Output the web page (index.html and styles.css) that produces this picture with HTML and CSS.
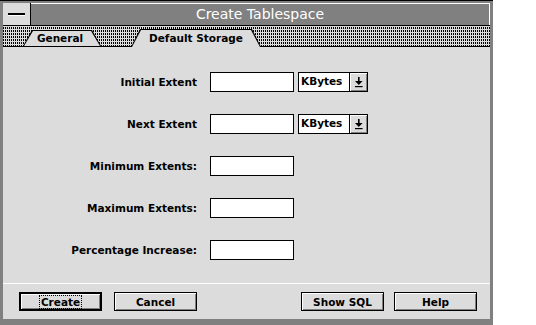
FILE: index.html
```html
<!DOCTYPE html>
<html>
<head>
	<title>Create Tablespace</title>
	<link rel="stylesheet" href="styles.css">
</head>
<body>
<div class="window">
	<div class="titlebar">
		<div class="sysmenu"><span class="dash"></span></div>
		<div class="title">Create Tablespace</div>
	</div>

	<div class="tabs">
		<div class="tab general"><span>General</span></div>
		<div class="tab storage active"><span>Default Storage</span></div>
	</div>

	<div class="panel">
		<div class="row">
			<label>Initial Extent</label>
			<div class="field"></div>
			<div class="combo">
				<span class="combo-text">KBytes</span>
				<span class="combo-btn">
					<svg width="9" height="11" viewBox="0 0 9 11">
						<rect x="4" y="0" width="1.6" height="6" fill="#000"/>
						<polygon points="1,4 8.6,4 4.8,8" fill="#000"/>
						<rect x="1" y="9" width="7.6" height="1.2" fill="#000"/>
					</svg>
				</span>
			</div>
		</div>
		<div class="row">
			<label>Next Extent</label>
			<div class="field"></div>
			<div class="combo">
				<span class="combo-text">KBytes</span>
				<span class="combo-btn">
					<svg width="9" height="11" viewBox="0 0 9 11">
						<rect x="4" y="0" width="1.6" height="6" fill="#000"/>
						<polygon points="1,4 8.6,4 4.8,8" fill="#000"/>
						<rect x="1" y="9" width="7.6" height="1.2" fill="#000"/>
					</svg>
				</span>
			</div>
		</div>
		<div class="row">
			<label>Minimum Extents:</label>
			<div class="field"></div>
		</div>
		<div class="row">
			<label>Maximum Extents:</label>
			<div class="field"></div>
		</div>
		<div class="row">
			<label>Percentage Increase:</label>
			<div class="field"></div>
		</div>
	</div>

	<div class="footer">
		<div class="group">
			<button class="btn default"><span class="focus">Create</span></button>
			<button class="btn">Cancel</button>
		</div>
		<div class="group right">
			<button class="btn">Show SQL</button>
			<button class="btn">Help</button>
		</div>
	</div>
</div>
</body>
</html>
```

FILE: styles.css
```css
*{
	margin: 0;
	padding: 0;
	box-sizing: border-box;
}
body{
	background: #fff;
	font-family: "DejaVu Sans", "Liberation Sans", sans-serif;
	font-size: 10.5px;
	font-weight: bold;
	color: #000;
}
.window{
	width: 493px;
	height: 325px;
	background: #808080;
	border-top: 1px solid #000;
	padding: 2px 3px 6px 3px;
	display: flex;
	flex-direction: column;
}

/* title bar */
.titlebar{
	flex: none;
	display: flex;
	height: 23px;
	border-bottom: 1px solid #000;
}
.sysmenu{
	width: 28px;
	background: #dcdcdc;
	border-right: 1px solid #000;
	display: flex;
	align-items: center;
	justify-content: center;
}
.dash{
	width: 17px;
	height: 2px;
	background: #000;
	box-shadow: 0 1px #fff;
}
.title{
	flex: 1;
	background: #808080;
	color: #fff;
	font-size: 14px;
	font-weight: normal;
	text-align: center;
	line-height: 20px;
	border-top: 1px solid #fff;
	border-right: 1px solid #fff;
}

/* tab strip */
.tabs{
	flex: none;
	height: 21px;
	border-bottom: 1px solid #000;
	display: flex;
	align-items: flex-end;
	gap: 30px;
	padding-left: 20px;
	background-color: #dcdcdc;
	background-image: linear-gradient(#dcdcdc 1px, transparent 1px), linear-gradient(90deg, #000 1px, transparent 1px);
	background-size: 2px 3px;
}
.tab{
	height: 16px;
	background: #000;
	padding: 1px 1px 0;
	clip-path: polygon(9px 0, calc(100% - 9px) 0, 100% 100%, 0 100%);
}
.tab span{
	display: block;
	height: 100%;
	background: #dcdcdc;
	text-align: center;
	line-height: 15px;
	clip-path: polygon(9px 0, calc(100% - 9px) 0, 100% 100%, 0 100%);
}
.general{
	width: 78px;
}
.general span{
	padding-right: 4px;
}
.storage{
	width: 130px;
}
.tab.active{
	height: 18px;
	margin-bottom: -1px;
}
.tab.active span{
	line-height: 16px;
}

/* form */
.panel{
	flex: 1;
	background: #dcdcdc;
	padding-top: 25px;
	display: flex;
	flex-direction: column;
	gap: 22px;
}
.row{
	display: flex;
	align-items: center;
	height: 20px;
}
.row label{
	width: 194px;
	margin-right: 13px;
	text-align: right;
}
.field{
	width: 84px;
	height: 20px;
	background: #fff;
	border: 1px solid #000;
}
.combo{
	width: 70px;
	height: 20px;
	margin-left: 4px;
	display: flex;
	background: #fff;
	border: 1px solid #000;
}
.combo-text{
	flex: 1;
	padding-left: 2px;
	line-height: 17px;
}
.combo-btn{
	width: 18px;
	border-left: 1px solid #000;
	background: #dcdcdc;
	box-shadow: inset 1px 1px #fff, inset -1px -1px #808080;
	display: flex;
	align-items: center;
	justify-content: center;
}

/* buttons */
.footer{
	flex: none;
	height: 36px;
	background: #dcdcdc;
	border-top: 1px solid #fff;
	display: flex;
	justify-content: space-between;
	padding: 8px 13px 0 16px;
}
.group{
	display: flex;
	gap: 12px;
}
.group.right{
	gap: 10px;
}
.btn{
	width: 83px;
	height: 19px;
	background: #dcdcdc;
	border: 1px solid #000;
	box-shadow: inset 1px 1px #fff, inset -1px -1px #808080;
	font: inherit;
	color: #000;
	display: flex;
	align-items: center;
	justify-content: center;
}
.btn.default{
	border-width: 2px;
}
.focus{
	border: 1px dotted #000;
	padding: 0 1px;
	line-height: 12px;
}
```
